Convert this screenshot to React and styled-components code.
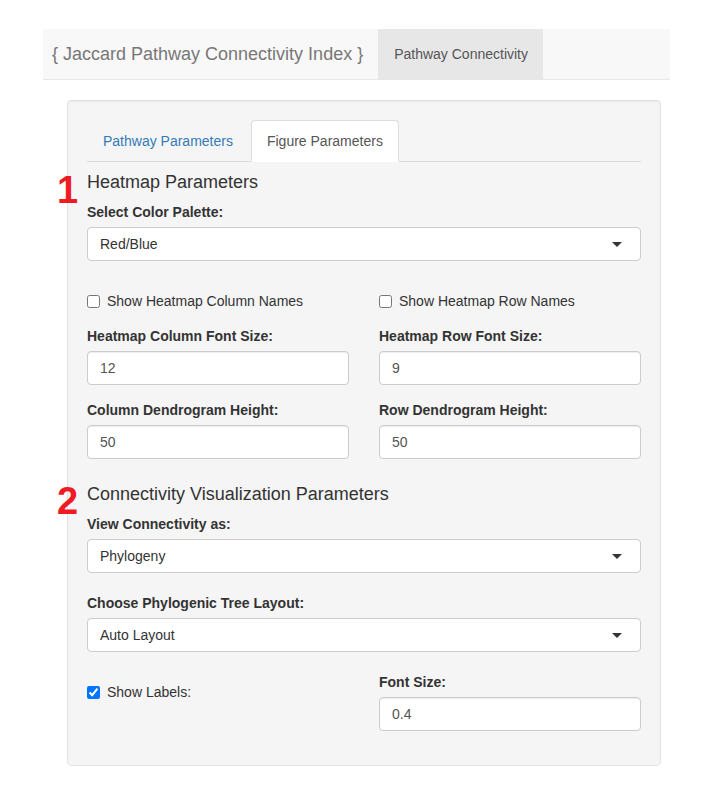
import React from 'react';
import styled, { createGlobalStyle } from 'styled-components'

const GlobalStyle = createGlobalStyle`
  * {
    box-sizing: border-box;
  }
  body {
    margin: 0;
    background-color: #fff;
    font-family: "Liberation Sans", Arial, Helvetica, sans-serif;
    font-size: 14px;
    line-height: 20px;
    color: #333;
  }
`

const Page = styled.div`
  width: 670px;
  padding: 29px 0 0 43px;
`

const Navbar = styled.div`
  display: flex;
  align-items: stretch;
  height: 51px;
  background-color: #f8f8f8;
  border-bottom: 1px solid #e7e7e7;
`
const Brand = styled.div`
  padding: 0 15px 0 9px;
  font-size: 18px;
  line-height: 50px;
  color: #777;
`
const NavItem = styled.div`
  padding: 0 15px 0 16px;
  line-height: 50px;
  color: #555;
  background-color: ${props => (props.active ? '#e7e7e7' : 'transparent')};
`

const Well = styled.div`
  display: flex;
  flex-direction: column;
  width: 594px;
  margin: 20px 0 0 24px;
  padding: 19px;
  background-color: #f5f5f5;
  border: 1px solid #e3e3e3;
  border-radius: 4px;
  box-shadow: inset 0 1px 1px rgba(0, 0, 0, 0.05);
`

const Tabs = styled.div`
  display: flex;
  border-bottom: 1px solid #ddd;
`
const Tab = styled.div`
  margin: 0 2px -1px 0;
  padding: 10px 15px;
  line-height: 20px;
  border: 1px solid ${props => (props.active ? '#ddd' : 'transparent')};
  border-bottom-color: transparent;
  border-radius: 4px 4px 0 0;
  background-color: ${props => (props.active ? '#fff' : 'transparent')};
  color: ${props => (props.active ? '#555' : '#337ab7')};
`

const Heading = styled.h4`
  position: relative;
  margin: 10px 0;
  font-size: 18px;
  font-weight: normal;
  line-height: 20px;
  color: #333;
`
const Marker = styled.span`
  position: absolute;
  left: -30px;
  top: ${props => props.top}px;
  font-size: 38px;
  font-weight: bold;
  line-height: 38px;
  color: #ed1c24;
`

const Group = styled.div`
  margin-bottom: ${props => props.gap || 15}px;
`
const Label = styled.label`
  display: block;
  margin-bottom: 5px;
  font-weight: bold;
  line-height: 20px;
`

const Select = styled.div`
  display: flex;
  align-items: center;
  height: 34px;
  padding: 0 18px 0 12px;
  background-color: #fff;
  border: 1px solid #ccc;
  border-radius: 4px;
  color: #333;
  &::after {
    content: '';
    margin-left: auto;
    border-style: solid;
    border-width: 5px 5px 0 5px;
    border-color: #333 transparent transparent transparent;
  }
`

const Input = styled.div`
  height: 34px;
  padding: 7px 12px;
  line-height: 18px;
  background-color: #fff;
  border: 1px solid #ccc;
  border-radius: 4px;
  box-shadow: inset 0 1px 1px rgba(0, 0, 0, 0.075);
  color: #555;
`

const Columns = styled.div`
  display: grid;
  grid-template-columns: 1fr 1fr;
  column-gap: 30px;
  margin-top: ${props => props.top || 0}px;
`

const Check = styled.label`
  display: flex;
  align-items: center;
  align-self: start;
  margin-top: ${props => props.top || 0}px;
  line-height: 20px;
  color: #333;
  input {
    width: 13px;
    height: 13px;
    margin: 0 7px 0 0;
  }
`

const App = () => {
  return (
    <Page>
      <GlobalStyle />
      <Navbar>
        <Brand>{'{ Jaccard Pathway Connectivity Index }'}</Brand>
        <NavItem active>Pathway Connectivity</NavItem>
      </Navbar>
      <Well>
        <Tabs>
          <Tab>Pathway Parameters</Tab>
          <Tab active>Figure Parameters</Tab>
        </Tabs>

        <Heading>
          <Marker top={-1}>1</Marker>
          Heatmap Parameters
        </Heading>
        <Group>
          <Label>Select Color Palette:</Label>
          <Select>Red/Blue</Select>
        </Group>
        <Columns top={15}>
          <Check>
            <input type="checkbox" readOnly />
            Show Heatmap Column Names
          </Check>
          <Check>
            <input type="checkbox" readOnly />
            Show Heatmap Row Names
          </Check>
        </Columns>
        <Columns top={15}>
          <Group>
            <Label>Heatmap Column Font Size:</Label>
            <Input>12</Input>
          </Group>
          <Group>
            <Label>Heatmap Row Font Size:</Label>
            <Input>9</Input>
          </Group>
          <Group>
            <Label>Column Dendrogram Height:</Label>
            <Input>50</Input>
          </Group>
          <Group>
            <Label>Row Dendrogram Height:</Label>
            <Input>50</Input>
          </Group>
        </Columns>

        <Heading>
          <Marker top={-2}>2</Marker>
          Connectivity Visualization Parameters
        </Heading>
        <Group gap={20}>
          <Label>View Connectivity as:</Label>
          <Select>Phylogeny</Select>
        </Group>
        <Group gap={20}>
          <Label>Choose Phylogenic Tree Layout:</Label>
          <Select>Auto Layout</Select>
        </Group>
        <Columns>
          <Check top={10}>
            <input type="checkbox" checked readOnly />
            Show Labels:
          </Check>
          <Group>
            <Label>Font Size:</Label>
            <Input>0.4</Input>
          </Group>
        </Columns>
      </Well>
    </Page>
  )
}

export default App
